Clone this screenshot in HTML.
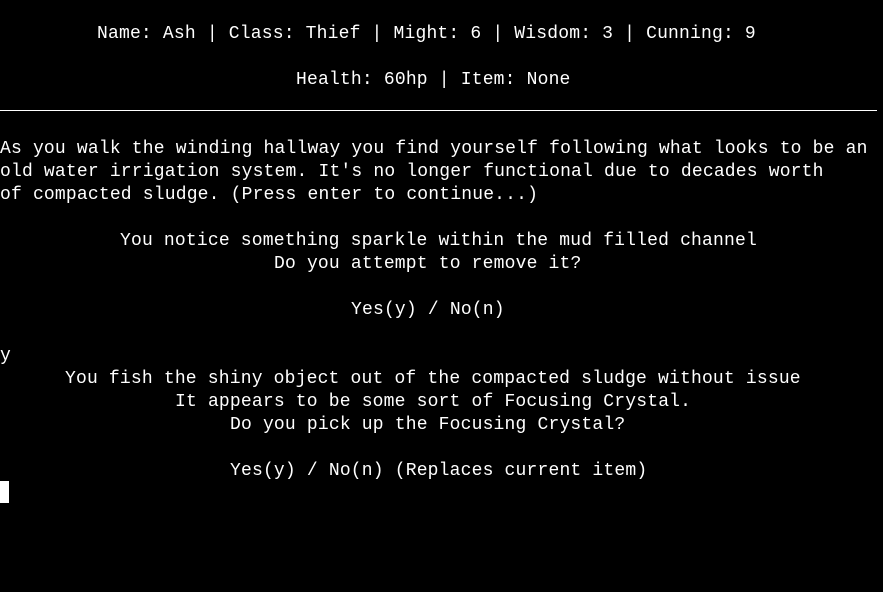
<!DOCTYPE html>
<html><head><meta charset="utf-8"><style>
html,body{margin:0;padding:0;background:#000;width:883px;height:592px;overflow:hidden;}
.l{position:absolute;white-space:pre;font-family:"Liberation Mono","Courier New",monospace;font-size:18px;line-height:23px;height:23px;color:#fff;letter-spacing:0.18px;}
.hr{position:absolute;left:0;top:110px;width:877px;height:1px;background:#fff;}
.cur{position:absolute;left:0;top:481px;width:9px;height:22px;background:#fff;}
</style></head><body>
<div class="l" style="left:97px;top:22.5px">Name: Ash | Class: Thief | Might: 6 | Wisdom: 3 | Cunning: 9</div>
<div class="l" style="left:296px;top:68.5px">Health: 60hp | Item: None</div>
<div class="hr"></div>
<div class="l" style="left:0;top:137.5px">As you walk the winding hallway you find yourself following what looks to be an</div>
<div class="l" style="left:0;top:160.5px">old water irrigation system. It's no longer functional due to decades worth</div>
<div class="l" style="left:0;top:183.5px">of compacted sludge. (Press enter to continue...)</div>
<div class="l" style="left:120px;top:229.5px">You notice something sparkle within the mud filled channel</div>
<div class="l" style="left:274px;top:252.5px">Do you attempt to remove it?</div>
<div class="l" style="left:351px;top:298.5px">Yes(y) / No(n)</div>
<div class="l" style="left:0;top:344.5px">y</div>
<div class="l" style="left:65px;top:367.5px">You fish the shiny object out of the compacted sludge without issue</div>
<div class="l" style="left:175px;top:390.5px">It appears to be some sort of Focusing Crystal.</div>
<div class="l" style="left:230px;top:413.5px">Do you pick up the Focusing Crystal?</div>
<div class="l" style="left:230px;top:459.5px">Yes(y) / No(n) (Replaces current item)</div>
<div class="cur"></div>
</body></html>
